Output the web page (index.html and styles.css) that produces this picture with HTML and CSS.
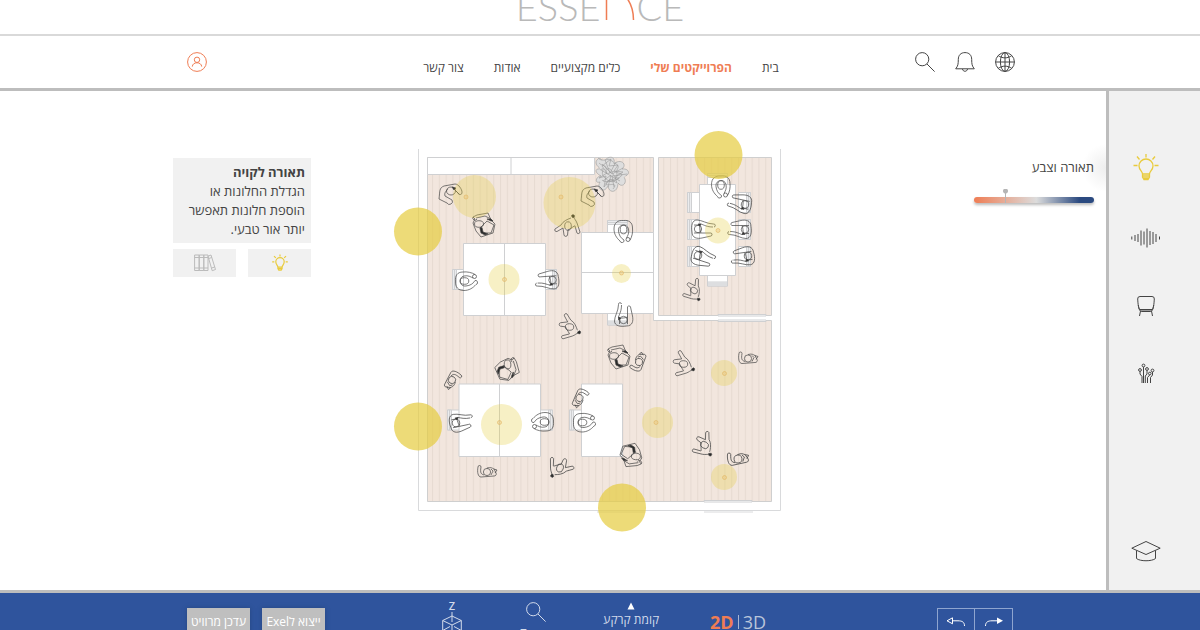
FILE: index.html
```html
<!DOCTYPE html>
<html lang="he" dir="rtl">
<head>
<meta charset="utf-8">
<title>Essence</title>
<link rel="stylesheet" href="styles.css">
</head>
<body>
<div class="app">
  <div class="brand">
    <a class="logo" href="#" dir="ltr" aria-label="Essence"><span>ESSE</span><svg class="logo-arch" viewBox="0 0 32 32"><path d="M3.500 32V2M3.500 2H8C22 2 30.500 16 30.500 32"/></svg><span>CE</span></a>
  </div>

  <header class="topbar">
    <div class="tools">
      <button class="icon-btn" aria-label="שפה"><svg class="line" viewBox="0 0 20 20"><circle cx="10" cy="10" r="9.400"/><ellipse cx="10" cy="10" rx="4.600" ry="9.400"/><path d="M10 .6V19.400M.6 10H19.400M3.200 3.600C7 6.600 13 6.600 16.800 3.600M3.200 16.400C7 13.400 13 13.400 16.800 16.400"/></svg></button>
      <button class="icon-btn" aria-label="התראות"><svg class="line" viewBox="0 0 20 20"><path d="M.7 16.800C3 14 3.300 12 3.300 7.500C3.300 3 6 .6 10 .6S16.700 3 16.700 7.500C16.700 12 17 14 19.300 16.800ZM7.500 17C7.800 20 12.200 20 12.500 17"/></svg></button>
      <button class="icon-btn" aria-label="חיפוש"><svg class="line" viewBox="0 0 20 20"><circle cx="7.200" cy="7.200" r="6.600"/><path d="M12 12L19.600 19.600"/></svg></button>
    </div>
    <nav class="menu">
      <a href="#">בית</a>
      <a href="#" class="current">הפרוייקטים שלי</a>
      <a href="#">כלים מקצועיים</a>
      <a href="#">אודות</a>
      <a href="#">צור קשר</a>
    </nav>
    <button class="icon-btn user" aria-label="חשבון"><svg class="line" viewBox="0 0 20 20"><circle cx="10" cy="10" r="9.400"/><circle cx="10" cy="7.800" r="2.700"/><path d="M5.300 14.600C5.500 9.500 14.500 9.500 14.700 14.600"/></svg></button>
  </header>

  <div class="workspace">
    <aside class="rail">
      <button class="rail-btn bulb" aria-label="תאורה"><svg class="line" viewBox="0 0 30 30"><path d="M11.500 21C11.500 18.500 8 17 8 13A7 7 0 0 1 22 13C22 17 18.500 18.500 18.500 21ZM11.500 21V24L13 26.500H17L18.500 24V21M12 23H18M12.500 25H17.500M15 1V4.500M2.500 12.500H6.500M23.500 12.500H27.500M6 3.500L8.500 6.500M24 3.500L21.500 6.500"/></svg></button>
      <button class="rail-btn" aria-label="אקוסטיקה"><svg class="line bars" viewBox="0 0 30 30"><path d="M.8 13.500V16.500M4 12V18M7 11V19M10 7.500V22.500M13 8.500V21.500M16 5.500V24.500M19 8V22M22 9V21M25 11V19M28.500 13.500V16.500"/></svg></button>
      <button class="rail-btn" aria-label="ריהוט"><svg class="line" viewBox="0 0 30 30"><path d="M9 5.500H21Q23.500 5.500 23.300 8C23 13 22.500 19 20.500 19H9.500C7.500 19 7 13 6.700 8Q6.500 5.500 9 5.500ZM7.300 14C8 18 8.500 20.500 11 20.500H19C21.500 20.500 22 18 22.700 14M9.500 20L8.500 25M20.500 20L21.500 25M9 18.500H21"/></svg></button>
      <button class="rail-btn" aria-label="טכנולוגיה"><svg class="line" viewBox="0 0 30 30"><circle cx="12.500" cy="6.500" r="1.400"/><circle cx="9" cy="11" r="1.400"/><circle cx="16" cy="10" r="1.400"/><circle cx="21.500" cy="11.500" r="1.400"/><circle cx="18.800" cy="14.500" r="1.300"/><path d="M12.500 8V24M9 12.500V15L11 17.500V24M16 11.500V15L14.300 17V24M21.500 13V16L19.500 18.500V24M18.700 16L16.500 18.500V24"/></svg></button>
      <button class="rail-btn learn" aria-label="הדרכה"><svg class="line" viewBox="0 0 30 30"><path d="M.8 12.200L15 5.500L29.200 12.200L15 18.500ZM5.500 14.500V22.500C9 25.500 21 25.500 24.500 22.500V14.500"/></svg></button>
    </aside>

    <main class="stage">
      <section class="tone">
        <label for="tone">תאורה וצבע</label>
        <input id="tone" type="range" min="0" max="100" value="25" dir="ltr">
      </section>

      <svg class="plan" viewBox="391 127 394 410" role="img" aria-label="תוכנית קומה">
        <defs>
          <pattern id="boards" x="432" width="6.800" height="20" patternUnits="userSpaceOnUse"><path d="M0 0H6.800V20H0Z" fill="#f2e6de"/><path d="M.5 0V20" stroke="#e7dbd2" stroke-width="1"/></pattern>
          <g id="chair"><path d="M0 -10H12V10H0Z" fill="#fff"/><path d="M0 -10H4V10H0ZM2 -10V10" fill="#ebecee"/></g>
          <g id="sitting"><path d="M10 -6.500C7 -8.500 2 -9.500 -2 -9C-8 -9 -10 -5 -9.500 0C-10 6 -7 9.500 -1 9.500C4 9.500 8 7 11 3.500A2 2 0 0 0 10 -.5C8 3 5 4.500 1 5C-6 6 -7 -4 -1 -5C3 -6 6 -4 8 -3"/><ellipse cx="-.5" cy="0" rx="4.300" ry="3.300"/><circle cx="9.500" cy="-4.500" r="2"/></g>
          <g id="reaching"><path d="M16 -2A1.500 1.500 0 0 0 15.500 -5C9 -5 4 -9 -1 -9C-6 -9 -7 -3 -6 3C-6 9 -1 10 4 9L13 7A1.400 1.400 0 0 0 12 4L3 4M15 -2C9 -2 6 -4 3 -5C1 -6 2 2 3 4M-4 -4L3 -4M-4 4L3 4"/><circle r="3.700"/><path d="M0 -5L3 -5L1.500 -3Z" class="ink"/></g>
          <g id="walking"><path d="M3 -8C0 -7 -5 -5 -7 -1L-13 3A1.700 1.700 0 0 0 -11 5.500L-5 2L-4 9A1.800 1.800 0 0 0 -.5 9L0 4C4 2 7 -1 7 0L9 7A1.700 1.700 0 0 0 12 6L9 -3C8 -6 6 -7 6 -9"/><ellipse rx="3.300" ry="4.200"/><path d="M3.500 -10A1.500 1.500 0 0 1 6.500 -9.500L5 -8Z" class="ink"/></g>
          <g id="carrying"><path d="M-11 -8L-7 -10L4 -12L7 -5L11 -1L9 8L-3 12L-8 6L-11 -2L-9 -6ZM-8 -7L1 -9L7 -6M3 -4L10 0L7 8L-1 8L-4 3ZM-11 -8A2 2 0 0 0 -7 -6"/><ellipse cx="-5" cy="-1" rx="4.500" ry="3.300"/><path d="M-4 3L-2 2.500L-1 7L4 9L1 10L-3 8ZM3 -6L7 -6L9 -4L7 -4Z" class="ink"/></g>
          <g id="turning"><path d="M-12 5C-11 -3 -12 -6 -7 -8L4 -10C8 -10 11 -4 11 -2A1.700 1.700 0 0 1 7 -1L3 -5M-12 5L-4 9A2 2 0 0 0 1 6L-6 2C-7 -1 -5 -3 -3 -5M3 -5L8 0"/><ellipse cx="0" cy="-3" rx="4.500" ry="4"/><path d="M1 -7L5 -6L3 -4Z" class="ink"/></g>
          <g id="child"><path d="M-6 -5A1.500 1.500 0 0 0 -9 -5C-10 0 -9 5 -6 5L7 4A2 2 0 0 0 9 1L7 -3C5 -4 4 -5 0 -4M-6 -5C-7 1 -6 2 -3 3M4 -3L6 -1L4 3M7 -3L10 -2L8 1"/><circle r="3.600"/></g>
          <g id="lamp"><circle r="2"/></g>
        </defs>

        <g class="walls"><path d="M418.500 149V510.500H780.500V149M597 512H645M704 512H753"/></g>
        <g class="floor">
          <path d="M427.500 157.500H653.500V320.500H771.500V501.500H427.500Z"/>
          <path d="M658.500 157.500H771.500V315.500H658.500Z"/>
        </g>
        <g class="furniture">
          <path d="M427.500 157.500H594.500V174.500H427.500ZM511 157.500V174.500"/>
          <path d="M718 314.500H766V316H718ZM718 320H766V321.500H718ZM704 500.500H752V502H704Z"/>
          <use href="#chair" x="452.500" y="279.500"/>
          <use href="#chair" transform="translate(556.500 279.500) rotate(180)"/>
          <use href="#chair" transform="translate(617.500 220.500) rotate(90)"/>
          <use href="#chair" transform="translate(617.500 325) rotate(-90)"/>
          <use href="#chair" x="687.500" y="202.500"/><use href="#chair" x="687.500" y="229.500"/><use href="#chair" x="687.500" y="256.500"/>
          <use href="#chair" transform="translate(750.500 202.500) rotate(180)"/><use href="#chair" transform="translate(750.500 229.500) rotate(180)"/><use href="#chair" transform="translate(750.500 256.500) rotate(180)"/>
          <use href="#chair" transform="translate(717.500 173.500) rotate(90)"/>
          <use href="#chair" transform="translate(717.500 286) rotate(-90)"/>
          <use href="#chair" x="447.500" y="420"/>
          <use href="#chair" transform="translate(552.500 420) rotate(180)"/>
          <use href="#chair" x="569.500" y="420"/>
          <path d="M463.500 243.500H545.500V315.500H463.500ZM504.500 243.500V315.500"/>
          <path d="M581.500 232.500H653.500V313.500H581.500ZM581.500 272.500H653.500"/>
          <path d="M699.500 184.500H735.500V275.500H699.500Z"/>
          <path d="M459 384H540.500V456.500H459ZM499.500 384V456.500"/>
          <path d="M581.500 384H622.500V456.500H581.500Z"/>
        </g>
        <g class="plant">
          <path d="M597 160C600 156 604 161 602 164C608 154 616 156 614 164C620 158 628 164 622 169C631 168 630 177 623 176C629 182 622 189 618 183C618 193 609 194 608 186C604 194 596 189 600 182C594 184 596 176 601 176C595 173 594 168 601 169C596 166 595 162 597 160Z"/>
          <path d="M602 164L612 174L623 168M605 160L610 173L616 162M601 170L611 176L620 181M603 181L611 175L608 187M614 187L612 176L627 174M599 163C604 168 607 163 606 171S616 166 617 174S608 178 606 183S620 180 613 189M598 158C603 163 607 157 612 161S620 165 617 170S627 172 620 177S612 184 605 178S608 166 600 170M607 169C613 166 612 179 618 178S606 185 602 180M611 159L609 166L618 165L614 171L623 172L615 177L617 183L610 179L604 187L606 176L599 178L607 173L602 166Z"/>
        </g>
        <g class="people">
          <use href="#turning" x="451" y="194"/>
          <use href="#turning" x="593" y="196"/>
          <use href="#carrying" x="484" y="225"/>
          <use href="#carrying" transform="translate(507 369.500) rotate(85)"/>
          <use href="#carrying" x="619" y="357"/>
          <use href="#carrying" transform="translate(631 455) rotate(185)"/>
          <use href="#walking" x="568" y="226"/>
          <use href="#walking" transform="translate(569.500 327) rotate(92)"/>
          <use href="#walking" transform="translate(683.500 364) rotate(92)"/>
          <use href="#walking" transform="translate(560 468) rotate(198)"/>
          <use href="#walking" transform="translate(704.500 445) rotate(122)"/>
          <use href="#walking" transform="translate(694 290.500) rotate(125) scale(.9 .9)"/>
          <use href="#sitting" x="465" y="281"/>
          <use href="#sitting" x="583" y="422.500"/>
          <use href="#sitting" transform="translate(544 422) rotate(180)"/>
          <use href="#sitting" transform="translate(623.500 230) rotate(90)"/>
          <use href="#sitting" transform="translate(721 185.500) rotate(90)"/>
          <use href="#reaching" transform="translate(552.500 280) rotate(176)"/>
          <use href="#reaching" transform="translate(623.500 320) rotate(-90)"/>
          <use href="#reaching" transform="translate(456 423) rotate(-12)"/>
          <use href="#reaching" transform="translate(745 204.500) rotate(192)"/>
          <use href="#reaching" x="698" y="229"/>
          <use href="#reaching" transform="translate(745 229.500) rotate(180)"/>
          <use href="#reaching" transform="translate(698 255.500) rotate(18)"/>
          <use href="#reaching" transform="translate(748 256) rotate(172)"/>
          <use href="#child" transform="translate(452 380) rotate(122)"/>
          <use href="#child" x="487" y="472"/>
          <use href="#child" transform="translate(579.500 398) rotate(118)"/>
          <use href="#child" transform="translate(639 362) rotate(-65)"/>
          <use href="#child" x="748" y="358.500"/>
          <use href="#child" transform="translate(738 459) rotate(-8) scale(1.100)"/>
        </g>
        <g class="lamps">
          <use href="#lamp" x="466" y="197"/><use href="#lamp" x="561" y="197"/><use href="#lamp" x="504.500" y="279.500"/><use href="#lamp" x="621.500" y="273"/><use href="#lamp" x="718" y="230.500"/><use href="#lamp" x="499.500" y="422.500"/><use href="#lamp" x="656" y="422.500"/><use href="#lamp" x="724.500" y="373.500"/><use href="#lamp" x="724.500" y="477.500"/>
        </g>
        <g class="glow">
          <circle cx="474.500" cy="196.500" r="21.500"/><circle cx="569.500" cy="203" r="26"/>
          <circle cx="504" cy="279.500" r="15.500"/><circle cx="621.500" cy="273.500" r="9.500"/>
          <circle cx="718" cy="230.500" r="13"/><circle cx="501.500" cy="424.500" r="20.500"/>
          <circle cx="657.500" cy="422.500" r="15.500"/><circle cx="724" cy="373" r="13"/><circle cx="724" cy="477" r="13"/>
        </g>
        <g class="sun">
          <circle cx="418" cy="231.500" r="24"/><circle cx="418" cy="426.500" r="24"/><circle cx="718.500" cy="155" r="24"/><circle cx="622" cy="507.500" r="24"/>
        </g>
      </svg>

      <section class="advice">
        <div class="advice-card">
          <h2>תאורה לקויה</h2>
          <p>הגדלת החלונות או הוספת חלונות תאפשר יותר אור טבעי.</p>
        </div>
        <div class="advice-actions">
          <button class="bulb" aria-label="המלצות"><svg class="line" viewBox="0 0 30 30"><path d="M11.500 22C11.500 19 8 17.500 8 13A7 7 0 0 1 22 13C22 17.500 18.500 19 18.500 22ZM11.500 22V24.500L13 27H17L18.500 24.500V22M12 24.500H18M15 1V4M2 13H5.500M24.500 13H28M5 3.500L8 6.500M25 3.500L22 6.500"/></svg></button>
          <button class="books" aria-label="ספרייה"><svg class="line" viewBox="0 0 22 18"><path d="M.6 1H5.200V16.500H.6ZM5.200 1H9.800V16.500H5.200ZM9.800 1H14V16.500H9.800ZM.6 3.500H14M.6 14H14M14 2.200L17 1L21.500 15.500L18.200 16.700ZM14.600 4.600L17.700 3.500M17.700 14L20.700 13"/></svg></button>
        </div>
      </section>
    </main>
  </div>

  <footer class="dock">
    <div class="history">
      <button aria-label="בצע שוב"><svg viewBox="0 0 20 12"><path d="M1.500 10C1.500 6 4 4.800 8 4.800H14" class="stroke"/><path d="M13 1.500L19 4.800L13 8Z" fill="currentColor"/></svg></button>
      <button aria-label="בטל"><svg viewBox="0 0 20 12"><path d="M18.500 10C18.500 6 16 4.800 12 4.800H6M6.500 1.800L1 4.800L6.500 7.800Z" class="stroke"/></svg></button>
    </div>
    <div class="view">
      <div class="dims" dir="ltr"><button class="on">2D</button><span></span><button>3D</button></div>
      <button class="level"><svg viewBox="0 0 8 8"><path d="M4 .5L7.500 7.500H.5Z" fill="currentColor"/></svg>קומת קרקע</button>
      <button class="zoom"><svg class="line" viewBox="0 0 20 20"><circle cx="7.200" cy="7.200" r="6.600"/><path d="M12 12L19.600 19.600"/></svg>Zoom</button>
      <button class="axis"><span>Z</span><svg class="line" viewBox="0 0 20 24"><path d="M10 0V10M10 4L.7 8.500L10 13L19.300 8.500ZM.7 8.500V18.500L10 23.500L19.300 18.500V8.500M10 13V23.500M.7 18.500L8 14.500M19.300 18.500L12 14.500"/></svg></button>
    </div>
    <div class="exports">
      <button>ייצוא לExel</button>
      <button>עדכן מרוויט</button>
    </div>
  </footer>
</div>
</body>
</html>
```

FILE: styles.css
```css
* { box-sizing: border-box; }

body {
  margin: 0;
  color: #444;
  background: #fff;
  font-family: "Open Sans", "Noto Sans", sans-serif;
  font-size: 12px;
}

button {
  padding: 0;
  border: 0;
  background: none;
  color: inherit;
  font: inherit;
  cursor: pointer;
}

a { color: inherit; text-decoration: none; }
svg { display: block; }

.line { fill: none; stroke: currentColor; stroke-width: 1; }

.app {
  display: grid;
  grid-template-rows: 36px 55px 1fr 40px;
  height: 100vh;
  overflow: hidden;
}

.brand {
  display: flex;
  justify-content: center;
  align-items: flex-end;
  overflow: hidden;
  padding-bottom: 5px;
  border-bottom: 2px solid #d9d9d9;
}

.logo {
  display: flex;
  align-items: flex-end;
  color: #b9b9b9;
  font-family: Lato, sans-serif;
  font-size: 38px;
  font-weight: 300;
  line-height: 46px;
}

.logo-arch {
  width: 32px;
  height: 32px;
  margin: 0 2px 9px;
  fill: none;
  stroke: #ef7d54;
  stroke-width: 1.500;
}

.topbar {
  display: grid;
  grid-template-columns: 1fr auto 1fr;
  align-items: center;
  padding: 0 185px 0 187px;
  border-bottom: 3px solid #bdbdbd;
}

.tools { display: flex; gap: 20px; }
.icon-btn, .icon-btn svg { width: 20px; height: 20px; }
.user { justify-self: end; color: #ef7d54; }

.menu { display: flex; gap: 30px; padding-top: 11px; }
.current { color: #ef7d54; font-weight: 700; }

.workspace { display: flex; min-height: 0; }

.rail {
  display: flex;
  flex: 0 0 94px;
  flex-direction: column;
  gap: 38px;
  padding: 62px 18px 24px 0;
  border-left: 3px solid #bdbdbd;
  background: #f1f1f1;
}

.rail-btn { align-self: center; color: #444; }
.rail-btn, .rail-btn svg { width: 30px; height: 30px; }
.rail-btn.bulb { margin-bottom: 2px; }
.rail-btn.bulb svg { stroke-width: 1.300; }
.bulb { color: #e9cb3c; }
.learn { margin-top: auto; }

.stage {
  display: grid;
  flex: 1;
  grid-template-columns: 120px 1fr 138px;
  column-gap: 80px;
  align-items: start;
  padding: 36px 12px 0 173px;
  background: radial-gradient(circle at 100% 77px, #eee, #fff 24px);
}

.tone { display: grid; gap: 11px; padding-top: 30px; }
.tone label { font-size: 13px; line-height: 20px; }

.tone input {
  width: 120px;
  height: 24px;
  margin: 0;
  background: none;
  appearance: none;
}

.tone input::-webkit-slider-runnable-track {
  height: 6px;
  border-radius: 3px;
  background: linear-gradient(90deg, #ef7d54, #dcdcdc 52%, #2b4a80 88%);
  box-shadow: 0 2px 3px #bbb;
}

.tone input::-webkit-slider-thumb {
  width: 5px;
  height: 14px;
  margin-top: -8px;
  background: radial-gradient(circle at 50% 2px, #b5b5b5 2px, transparent 3px), linear-gradient(#b5b5b5, #b5b5b5) center / 1px 100% no-repeat;
  appearance: none;
}

.plan { justify-self: end; width: 394px; height: 410px; }
.walls { fill: none; stroke: #d9dadc; }
.floor { fill: url(#boards); stroke: #cfcfcf; }
.furniture { fill: #fff; stroke: #cfd0d2; }
.people { fill: none; stroke: #454545; stroke-width: .7; }
.ink { fill: #292929; }
.plant { fill: #dedede; stroke: #999; stroke-width: .6; }
.lamps { fill: #efc090; fill-opacity: .4; stroke: #e0ac74; stroke-width: .6; }
.glow { fill: #e6cc3f; fill-opacity: .3; }
.sun { fill: #e6cc3f; fill-opacity: .7; }

.advice { padding-top: 31px; }
.advice-card { padding: 5px 6px 4px; background: #f1f1f1; font-size: 13px; line-height: 19px; }
.advice-card h2, .advice-card p { margin: 0; font-size: inherit; }
.advice-actions { display: flex; gap: 12px; margin-top: 6px; }

.advice-actions button {
  display: flex;
  flex: 1;
  align-items: center;
  justify-content: center;
  height: 28px;
  background: #f1f1f1;
}

.advice-actions .bulb svg { width: 18px; height: 18px; stroke-width: 2; }
.books { color: #bbb; }
.books svg { width: 22px; height: 18px; }

.dock {
  display: grid;
  grid-template-columns: 1fr auto 1fr;
  align-items: start;
  overflow: hidden;
  padding: 0 187px;
  border-top: 3px solid #bdbdbd;
  background: #2f549d;
  color: #d3dbeb;
}

.history { display: flex; justify-self: start; margin-top: 15px; border: 1px solid #8fa5cf; color: #fff; }
.history button { display: flex; justify-content: center; width: 37px; height: 28px; padding-top: 7px; }
.history button + button { border-right: 1px solid #8fa5cf; }
.history svg { width: 20px; height: 12px; }
.stroke { fill: none; stroke: currentColor; }

.view { display: flex; align-items: flex-start; padding-left: 8px; }
.dims { display: flex; align-items: center; gap: 4px; margin-top: 18px; color: #b9c4da; font-size: 18px; line-height: 22px; }
.dims span { width: 1px; height: 14px; background: #a9b7d3; }
.dims .on { color: #ef7d54; font-weight: 700; }
.level { margin: 9px 51px 0; font-size: 12px; line-height: 20px; }
.level svg { width: 8px; height: 8px; margin: 0 auto; color: #fff; }
.zoom { margin-top: 9px; line-height: 14px; }
.zoom svg { width: 20px; height: 20px; margin: 0 auto 5px; }
.axis { width: 20px; margin: 7px 58px 0 0; font-size: 11px; font-weight: 600; line-height: 12px; }
.axis svg { width: 20px; height: 24px; }
.axis span { display: block; }

.exports { display: flex; justify-self: end; gap: 12px; margin-top: 15px; }

.exports button {
  width: 63px;
  height: 26px;
  background: #bfbfbf;
  box-shadow: 0 0 4px #27477f;
  color: #fff;
  font-size: 12px;
  white-space: nowrap;
}
```
